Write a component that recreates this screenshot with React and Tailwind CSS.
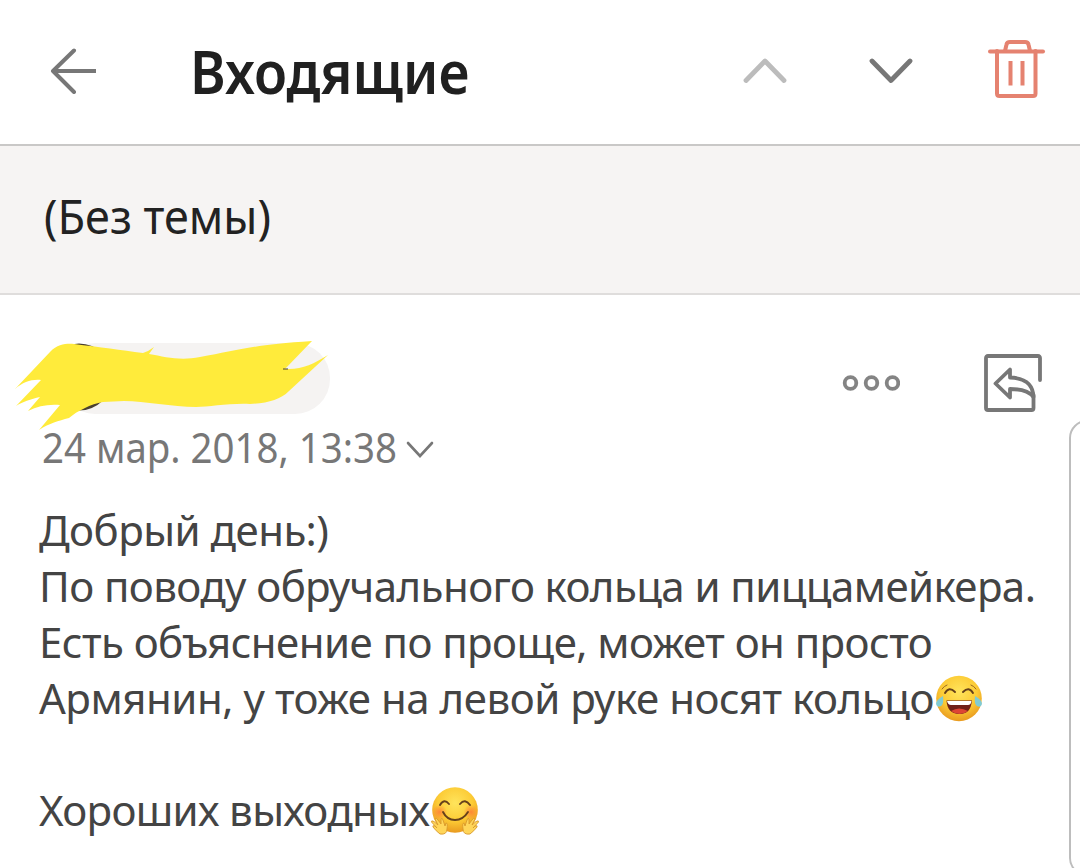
const BackIcon = () => (
    <svg className="h-[46px] w-[46px]" viewBox="0 0 46 46" fill="none" stroke="#777" strokeWidth="4" strokeLinecap="round" strokeLinejoin="round">
        <path d="M24 2.500 3 23 24 44" />
        <path d="M4 23H46" strokeLinecap="butt" />
    </svg>
);

const Chevron = ({ up = false, className }) => (
    <svg className={className} viewBox="0 0 44 26" fill="none" stroke="currentColor" strokeWidth="4.800" strokeLinecap="round" strokeLinejoin="round">
        <path d={up ? 'M3 22.500 22 3 41 22.500' : 'M3 3 22 22.500 41 3'} />
    </svg>
);

const TrashIcon = () => (
    <svg className="h-[60px] w-[58px]" viewBox="0 0 58 60" fill="none" stroke="#e58270" strokeWidth="4" strokeLinecap="round" strokeLinejoin="round">
        <path d="M2 12.500H55" />
        <path d="M17 12 18.500 5.500Q19 3 22 3H37Q40 3 40.500 5.500L42 12" />
        <path d="M9 12V54.500Q9 57 11.500 57H45Q47.500 57 47.500 54.500V12" />
        <path d="M22.500 22V46.500M34.500 22V46.500" strokeLinecap="butt" />
    </svg>
);

const MoreIcon = () => (
    <svg className="h-4 w-[58px]" viewBox="0 0 58 16" fill="none" stroke="#848484" strokeWidth="3.800">
        <circle cx="8.500" cy="8" r="5.800" />
        <circle cx="29.500" cy="8" r="5.800" />
        <circle cx="50.500" cy="8" r="5.800" />
    </svg>
);

const ReplyIcon = () => (
    <svg className="h-[58px] w-[58px]" viewBox="0 0 58 58" fill="none" stroke="#777" strokeWidth="3.800" strokeLinecap="round" strokeLinejoin="round">
        <path d="M56 26V4Q56 2 54 2H4Q2 2 2 4V54Q2 56 4 56H47.500Q49.500 56 49.500 54V41" />
        <path d="M26 15.500V23.500C40 24 49 29 49.500 43C45 37 36 35 26 35V43.500L11.500 29.500Z" />
    </svg>
);

// Scribble that hides the sender's name
const SenderChip = () => (
    <svg className="h-[92px] w-[322px]" viewBox="12 340 322 92">
        <rect x="60" y="343" width="270" height="71" rx="35" fill="#f5f3f2" />
        <circle cx="79" cy="377" r="33.500" fill="#4a4030" />
        <path
            fill="#ffeb3b"
            d="M15 389 50 352C58 344 66 343.500 74 344C100 347 121 350 143 353Q149 351 154 347L149 354C166 357 180 361 200 357C236 351 249 345 312 341L285 369C302 370 313 364 328 355L289 391C280 400 268 403 250 404C230 403 209 407 196 407C172 407 145 401 124 401L103 402C91 404 77 411 69 418C58 421 50 423 39 430L60 405C48 404 38 406 28 411L40 397C31 399 22 402 16 406L41 380C32 379 23 382 15 389Z"
        />
        <path d="M283 369H288" stroke="#4a4030" />
    </svg>
);

const FaceGradient = ({ id }) => (
    <radialGradient id={id} cx="50%" cy="35%" r="65%">
        <stop offset="0" stopColor="#ffe45c" />
        <stop offset="0.6" stopColor="#fccb35" />
        <stop offset="1" stopColor="#e99a1f" />
    </radialGradient>
);

const JoyEmoji = () => (
    <svg className="ml-px h-[50px] w-[48px] shrink-0" viewBox="0 0 48 50" role="img" aria-label="😂">
        <defs>
            <FaceGradient id="joy" />
        </defs>
        <circle cx="24" cy="25.500" r="22.800" fill="url(#joy)" />
        <path d="M10 20Q14 13 20 19M28 19Q34 13 38 20" fill="none" stroke="#65401b" strokeWidth="1.900" strokeLinecap="round" />
        <path d="M7 16Q9 13 12 12M36 12Q39 13 41 16" fill="none" stroke="#9b6a23" strokeWidth="1" strokeLinecap="round" />
        <path d="M11.500 27.500H37C36 36 33 41 24.500 41S12 36 11.500 27.500Z" fill="#702018" />
        <path d="M12 28H36.500Q36 32 33 32H16Q13 32 12 28Z" fill="#fff" />
        <path d="M16 38Q24 33 33 38Q29 41 24.500 41T16 38Z" fill="#dd4534" />
        <path d="M8 23Q1 27 1 31Q2 35 6 33Q9 31 8 23ZM40 23Q47 27 47 31Q46 35 42 33Q39 31 40 23Z" fill="#80cbd3" />
    </svg>
);

const HugEmoji = () => (
    <svg className="mt-0.5 ml-px h-[50px] w-[50px] shrink-0" viewBox="0 0 50 50" role="img" aria-label="🤗">
        <defs>
            <FaceGradient id="hug" />
            <radialGradient id="cheek">
                <stop offset="0" stopColor="#ff7138" stopOpacity="0.75" />
                <stop offset="1" stopColor="#ff7138" stopOpacity="0" />
            </radialGradient>
        </defs>
        <circle cx="25" cy="24" r="22.800" fill="url(#hug)" />
        <circle cx="9.500" cy="26" r="7.500" fill="url(#cheek)" />
        <circle cx="41" cy="26" r="7.500" fill="url(#cheek)" />
        <path d="M10 19Q14 12 19 18M30 18Q35 12 40 19" fill="none" stroke="#65401b" strokeWidth="1.900" strokeLinecap="round" />
        <path d="M13 26Q17 34 25 34T38 26" fill="none" stroke="#65401b" strokeWidth="1.900" strokeLinecap="round" />
        <g fill="#ffd65a" stroke="#d99a2c" strokeWidth="0.900" strokeLinejoin="round">
            <path id="hand" d="M10 48Q6 45 3 41Q2 39 5 40L7 42L1.500 36Q1 34 4 35.500L8 39L5 33Q6 31 8 34L11 38L11 33Q12 31 13 34L15 40L16 37Q18 37 17 43Q17 49 10 48Z" />
            <use href="#hand" transform="translate(50 0) scale(-1 1)" />
        </g>
    </svg>
);

const lines = [
    { text: 'Добрый день:)', spacing: 'tracking-[-0.5px]' },
    { text: 'По поводу обручального кольца и пиццамейкера.', spacing: 'tracking-[-0.58px]' },
    { text: 'Есть объяснение по проще, может он просто', spacing: 'tracking-[-0.54px]' },
    { text: 'Армянин, у тоже на левой руке носят кольцо', spacing: 'tracking-[-0.46px]', emoji: <JoyEmoji /> },
    { text: '', spacing: 'tracking-normal' },
    { text: 'Хороших выходных', spacing: 'tracking-[-0.65px]', emoji: <HugEmoji /> },
];

const App = () => {
    return (
        <div className="relative h-[868px] w-[1080px] overflow-hidden bg-white font-['Noto_Sans',sans-serif] whitespace-nowrap">
            <header className="flex h-[146px] items-center border-b-2 border-[#c9c8c7] pr-[34px] pb-0.5 pl-[50px]">
                <BackIcon />
                <h1 className="ml-[94px] flex-1 origin-left scale-x-[0.918] text-[59px] leading-[72px] font-semibold text-[#202020]">Входящие</h1>
                <Chevron up className="mr-[82px] h-[26px] w-[44px] text-[#bcbcbc]" />
                <Chevron className="mr-[75px] h-[26px] w-[44px] text-[#777]" />
                <div className="mb-1">
                    <TrashIcon />
                </div>
            </header>

            <div className="h-[149px] border-b-2 border-[#dfdddc] bg-[#f6f4f3] pt-[39px] pl-11 text-[47px] leading-[62px] text-[#222]">
                <div className="origin-left scale-x-[0.957]">(Без темы)</div>
            </div>

            <main>
                <div className="flex h-[131px] items-start pt-[45px] pr-[38px] pl-3">
                    <SenderChip />
                    <div className="mt-[35px] ml-auto flex">
                        <MoreIcon />
                    </div>
                    <div className="mt-[14px] ml-[84px]">
                        <ReplyIcon />
                    </div>
                </div>
                <div className="flex h-[42px] items-center pl-[42px] text-[42px] leading-[42px] text-[#777]">
                    <span className="origin-left scale-x-[0.915]">24 мар. 2018, 13:38</span>
                    <svg className="mt-1.5 -ml-[24px] h-[18px] w-[28px]" viewBox="0 0 28 18" fill="none" stroke="#777" strokeWidth="2.600" strokeLinecap="round">
                        <path d="M2 2 14 15 26 2" />
                    </svg>
                </div>
                <div className="mt-[34px] pl-[39px] text-[42px] leading-[56px] text-[#444]">
                    {lines.map((line, i) => (
                        <div key={i} className="flex h-14 items-center">
                            <span className={line.spacing}>{line.text}</span>
                            {line.emoji}
                        </div>
                    ))}
                </div>
            </main>

            {/* Edge panel handle */}
            <div className="absolute top-[420px] left-[1069px] h-[456px] w-[60px] rounded-[18px] border-2 border-[#bdbdbd]" />
        </div>
    );
};

export default App;
